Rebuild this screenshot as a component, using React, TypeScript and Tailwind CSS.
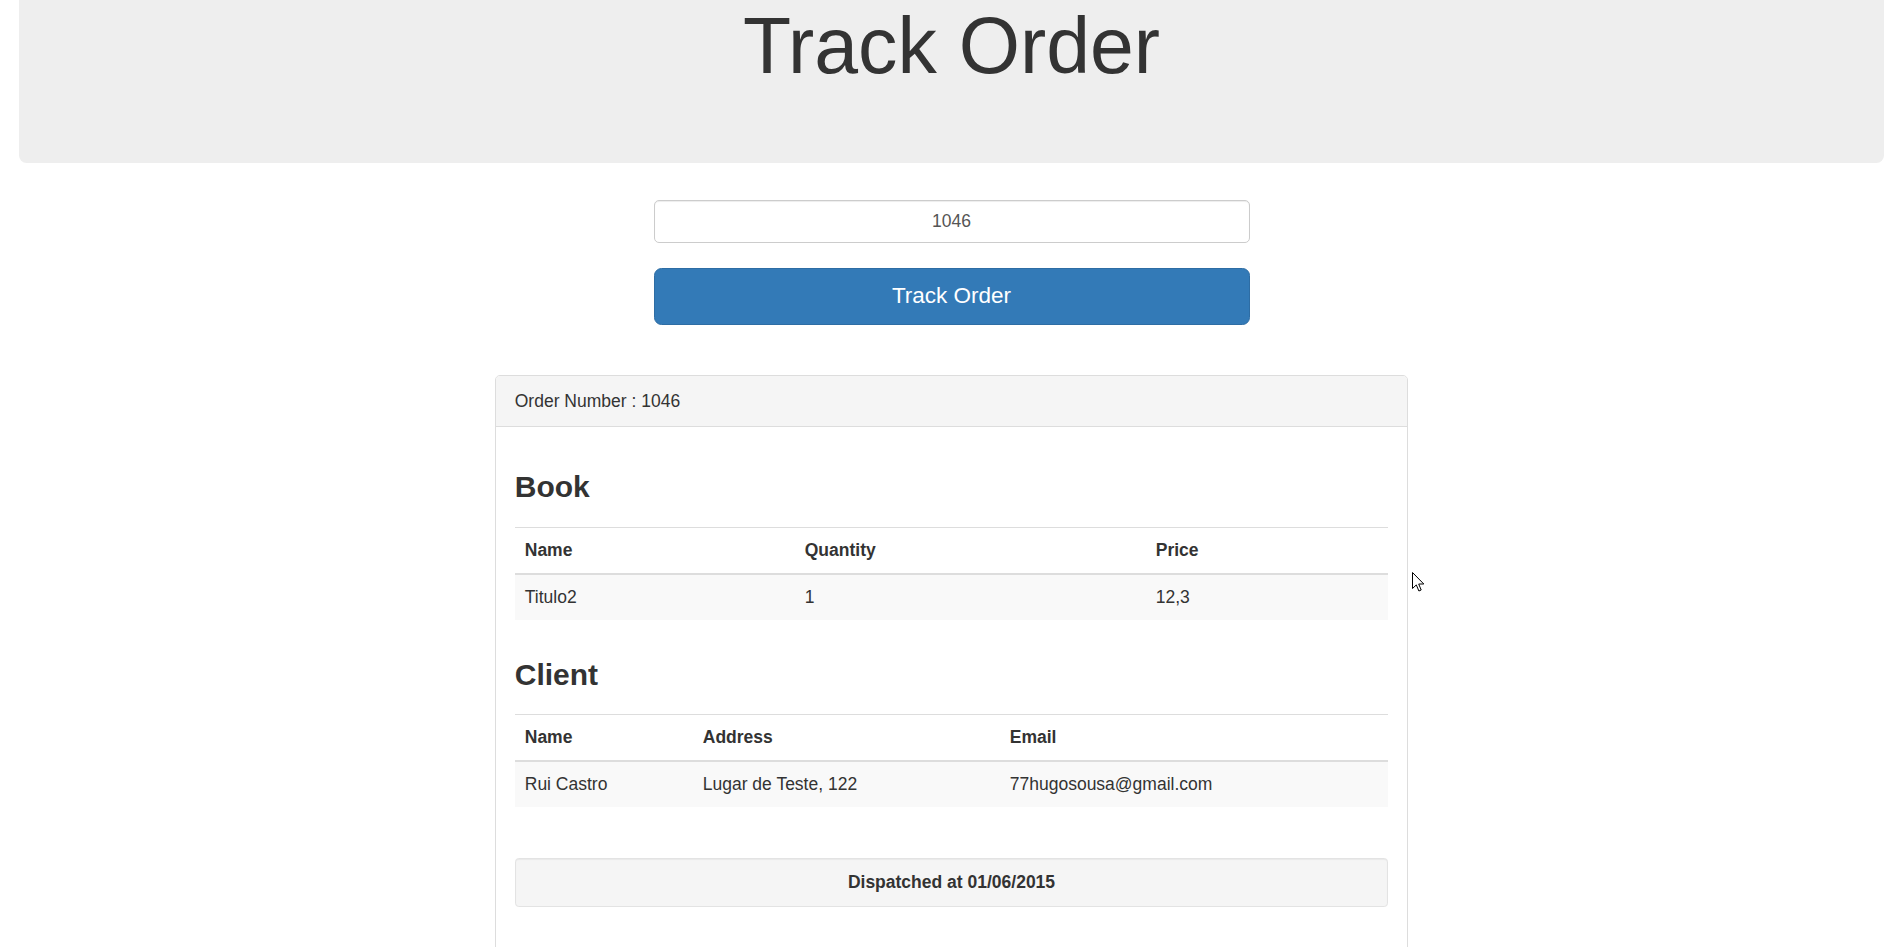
import React, { useState } from "react";

type Column = { label: string; width: string };

const bookColumns: Column[] = [
  { label: "Name", width: "w-[280px]" },
  { label: "Quantity", width: "w-[351px]" },
  { label: "Price", width: "" },
];

const clientColumns: Column[] = [
  { label: "Name", width: "w-[178px]" },
  { label: "Address", width: "w-[307px]" },
  { label: "Email", width: "" },
];

const bookRows = [["Titulo2", "1", "12,3"]];
const clientRows = [["Rui Castro", "Lugar de Teste, 122", "77hugosousa@gmail.com"]];

// Striped bootstrap-like table
function InfoTable({ columns, rows }: { columns: Column[]; rows: string[][] }) {
  return (
    <table className="w-full table-fixed border-collapse">
      <thead>
        <tr>
          {columns.map((col) => (
            <th
              key={col.label}
              className={`${col.width} border-t border-b-2 border-[#ddd] px-[10px] py-[10px] text-left font-bold leading-[25px]`}
            >
              {col.label}
            </th>
          ))}
        </tr>
      </thead>
      <tbody>
        {rows.map((row, i) => (
          <tr key={i} className={i % 2 === 0 ? "bg-[#f9f9f9]" : ""}>
            {row.map((cell, j) => (
              <td key={j} className="px-[10px] py-[10px] leading-[25px]">
                {cell}
              </td>
            ))}
          </tr>
        ))}
      </tbody>
    </table>
  );
}

function Cursor() {
  return (
    <svg
      className="absolute left-[1412px] top-[572px] pointer-events-none"
      width="14"
      height="21"
      viewBox="0 0 14 21"
    >
      <path
        d="M0.5 0.5 L0.5 16.5 L4.3 12.9 L6.9 19 L9.2 18 L6.7 12 L11.8 12 Z"
        fill="#fff"
        stroke="#000"
        strokeWidth="1"
        strokeLinejoin="miter"
      />
    </svg>
  );
}

export default function App() {
  const [orderNumber, setOrderNumber] = useState("1046");

  return (
    <div
      className="relative min-h-screen bg-white text-[#333] text-[17.5px] leading-[25px]"
      style={{ fontFamily: '"Liberation Sans", Arial, Helvetica, sans-serif' }}
    >
      <div className="px-[19px]">
        {/* Jumbotron */}
        <div className="h-[163px] rounded-b-[7.5px] bg-[#eee] pt-[2.5px]">
          <h1 className="text-center text-[78.75px] font-normal leading-[1.1]">Track Order</h1>
        </div>
      </div>

      {/* Search form */}
      <div className="mx-auto mt-[37px] flex w-[596px] flex-col">
        <input
          type="text"
          value={orderNumber}
          onChange={(e) => setOrderNumber(e.target.value)}
          className="h-[42.5px] w-full rounded-[5px] border border-[#ccc] bg-white px-[15px] text-center text-[17.5px] text-[#555] shadow-[inset_0_1px_1px_rgba(0,0,0,0.075)] outline-none"
        />
        <button className="mt-[25.5px] h-[57px] w-full rounded-[7.5px] border border-[#2e6da4] bg-[#337ab7] pb-[2px] text-[22.5px] leading-[30px] text-white">
          Track Order
        </button>
      </div>

      {/* Order panel */}
      <div className="mx-auto mt-[50px] w-[913px] rounded-[5px] border border-[#ddd] bg-white">
        <div className="rounded-t-[4px] border-b border-[#ddd] bg-[#f5f5f5] px-[18.75px] py-[12.5px]">
          Order Number : {orderNumber}
        </div>
        <div className="px-[18.75px] pt-[18.75px] pb-[60px]">
          <h3 className="mt-[24px] mb-[24px] text-[30px] font-bold leading-[1.1]">Book</h3>
          <InfoTable columns={bookColumns} rows={bookRows} />

          <h3 className="mt-[38px] mb-[23px] text-[30px] font-bold leading-[1.1]">Client</h3>
          <InfoTable columns={clientColumns} rows={clientRows} />

          <div className="mt-[51px] rounded-[3.75px] border border-[#e3e3e3] bg-[#f5f5f5] py-[11.25px] text-center font-bold shadow-[inset_0_1px_1px_rgba(0,0,0,0.05)]">
            Dispatched at 01/06/2015
          </div>
        </div>
      </div>

      <Cursor />
    </div>
  );
}
